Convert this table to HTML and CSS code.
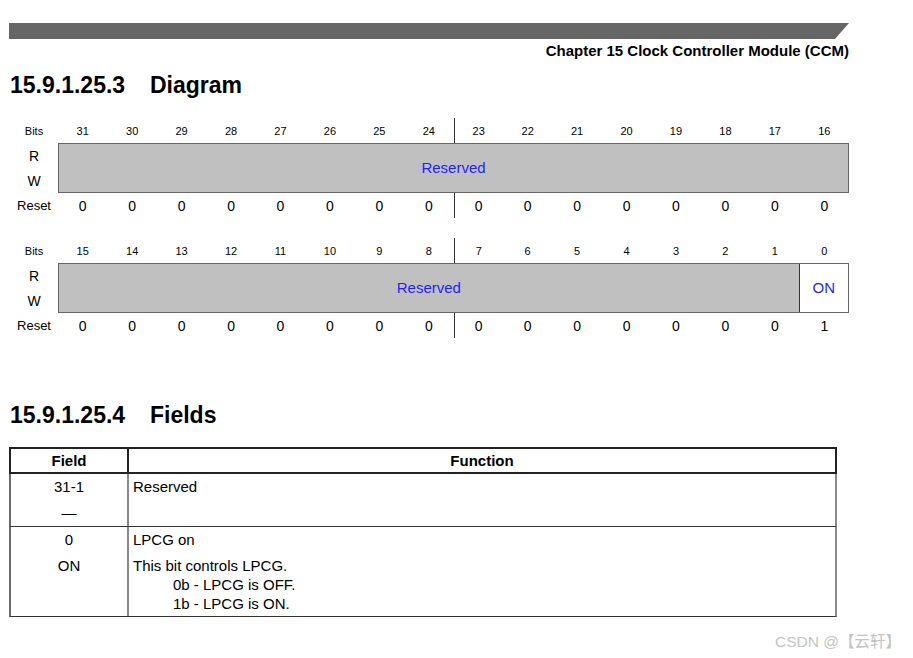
FILE: index.html
```html
<!DOCTYPE html>
<html lang="en">
<head>
<meta charset="utf-8">
<title>CCM LPCG Register</title>
<link rel="stylesheet" href="styles.css">
</head>
<body>
<div class="page">
  <div class="topbar"></div>
  <div class="chapter">Chapter 15 Clock Controller Module (CCM)</div>

  <h2 class="heading"><span class="num">15.9.1.25.3</span>Diagram</h2>

  <div class="reg">
    <div class="lbl small">Bits</div>
    <div class="bit">31</div><div class="bit">30</div><div class="bit">29</div><div class="bit">28</div>
    <div class="bit">27</div><div class="bit">26</div><div class="bit">25</div><div class="bit">24</div>
    <div class="bit div">23</div><div class="bit">22</div><div class="bit">21</div><div class="bit">20</div>
    <div class="bit">19</div><div class="bit">18</div><div class="bit">17</div><div class="bit">16</div>
    <div class="lbl rw r">R</div>
    <div class="lbl rw w">W</div>
    <div class="box">
      <div class="res full">Reserved</div>
    </div>
    <div class="lbl reset">Reset</div>
    <div class="val">0</div><div class="val">0</div><div class="val">0</div><div class="val">0</div>
    <div class="val">0</div><div class="val">0</div><div class="val">0</div><div class="val">0</div>
    <div class="val div">0</div><div class="val">0</div><div class="val">0</div><div class="val">0</div>
    <div class="val">0</div><div class="val">0</div><div class="val">0</div><div class="val">0</div>
  </div>

  <div class="reg second">
    <div class="lbl small">Bits</div>
    <div class="bit">15</div><div class="bit">14</div><div class="bit">13</div><div class="bit">12</div>
    <div class="bit">11</div><div class="bit">10</div><div class="bit">9</div><div class="bit">8</div>
    <div class="bit div">7</div><div class="bit">6</div><div class="bit">5</div><div class="bit">4</div>
    <div class="bit">3</div><div class="bit">2</div><div class="bit">1</div><div class="bit">0</div>
    <div class="lbl rw r">R</div>
    <div class="lbl rw w">W</div>
    <div class="box">
      <div class="res part">Reserved</div>
      <div class="on">ON</div>
    </div>
    <div class="lbl reset">Reset</div>
    <div class="val">0</div><div class="val">0</div><div class="val">0</div><div class="val">0</div>
    <div class="val">0</div><div class="val">0</div><div class="val">0</div><div class="val">0</div>
    <div class="val div">0</div><div class="val">0</div><div class="val">0</div><div class="val">0</div>
    <div class="val">0</div><div class="val">0</div><div class="val">0</div><div class="val">1</div>
  </div>

  <h2 class="heading fields-heading"><span class="num">15.9.1.25.4</span>Fields</h2>

  <div class="fields">
    <div class="fhead">
      <div class="fh-field">Field</div>
      <div class="fh-func">Function</div>
    </div>
    <div class="frow">
      <div class="fcell field">
        <p>31-1</p>
        <p class="gap">—</p>
      </div>
      <div class="fcell func">
        <p>Reserved</p>
      </div>
    </div>
    <div class="frow last">
      <div class="fcell field">
        <p>0</p>
        <p class="gap">ON</p>
      </div>
      <div class="fcell func">
        <p>LPCG on</p>
        <p class="gap">This bit controls LPCG.</p>
        <p class="indent">0b - LPCG is OFF.</p>
        <p class="indent">1b - LPCG is ON.</p>
      </div>
    </div>
  </div>

  <div class="watermark">CSDN @【云轩】</div>
</div>
</body>
</html>
```

FILE: styles.css
```css
* { box-sizing: border-box; }

body {
  margin: 0;
  background: #ffffff;
  color: #000000;
  font-family: "Liberation Sans", Arial, "Noto Sans CJK SC", sans-serif;
}

.page {
  position: relative;
  width: 913px;
  height: 658px;
  padding-top: 23px;
}

.topbar {
  margin-left: 9px;
  width: 840px;
  height: 16px;
  background: #666666;
  clip-path: polygon(0 0, 100% 0, calc(100% - 14px) 100%, 0 100%);
}

.chapter {
  width: 849px;
  margin-top: 3px;
  text-align: right;
  font-weight: bold;
  font-size: 15px;
  line-height: 18px;
}

.heading {
  margin: 12px 0 0 10px;
  font-size: 23px;
  line-height: 26px;
  font-weight: bold;
}

.heading .num {
  display: inline-block;
  width: 140px;
}

.fields-heading {
  margin-top: 64px;
}

/* register diagram */
.reg {
  margin-top: 20px;
  width: 849px;
  display: grid;
  grid-template-columns: 58px repeat(16, 1fr);
  grid-template-rows: 25px 25px 25px 25px;
}

.reg.second {
  margin-top: 20px;
}

.lbl {
  grid-column: 1;
  padding-left: 10px;
  display: flex;
  align-items: center;
  justify-content: center;
}

.lbl.small { font-size: 11px; }
.lbl.rw { font-size: 14px; }
.lbl.r { grid-row: 2; }
.lbl.w { grid-row: 3; }
.lbl.reset { grid-row: 4; font-size: 13px; }

.bit {
  font-size: 11px;
  display: flex;
  align-items: center;
  justify-content: center;
}

.val {
  grid-row: 4;
  font-size: 14px;
  display: flex;
  align-items: center;
  justify-content: center;
}

.div {
  border-left: 1px solid #333333;
}

.box {
  grid-column: 2 / 18;
  grid-row: 2 / 4;
  border: 1px solid #666666;
  display: grid;
  grid-template-columns: repeat(16, 1fr);
}

.res {
  background: #c0c0c0;
  color: #1f1fff;
  font-size: 15px;
  padding-bottom: 2px;
  display: flex;
  align-items: center;
  justify-content: center;
}

.res.full { grid-column: 1 / 17; }
.res.part { grid-column: 1 / 16; }

.on {
  grid-column: 16 / 17;
  border-left: 1px solid #333333;
  background: #ffffff;
  color: #1f1fff;
  font-size: 15px;
  padding-bottom: 2px;
  display: flex;
  align-items: center;
  justify-content: center;
}

/* fields table */
.fields {
  margin: 19px 0 0 9px;
  width: 828px;
  font-size: 15px;
}

.fhead {
  display: grid;
  grid-template-columns: 118px 1fr;
  height: 27px;
  border: 2px solid #222222;
  font-weight: bold;
}

.fh-field,
.fh-func {
  display: flex;
  align-items: center;
  justify-content: center;
}

.fh-field {
  border-right: 2px solid #222222;
}

.frow {
  display: grid;
  grid-template-columns: 118px 1fr;
  border-left: 2px solid #6a6a6a;
  border-right: 2px solid #8a8a8a;
  border-bottom: 1px solid #333333;
  height: 53px;
}

.frow.last {
  height: 90px;
}

.fcell {
  padding-top: 3px;
}

.fcell p {
  margin: 0;
  line-height: 19px;
}

.fcell p.gap {
  margin-top: 7px;
}

.field {
  text-align: center;
  border-right: 2px solid #8a8a8a;
}

.func {
  padding-left: 4px;
}

.func p.indent {
  padding-left: 40px;
}

.watermark {
  position: absolute;
  right: 12px;
  top: 632px;
  font-size: 15.5px;
  line-height: 20px;
  color: #c4c4c4;
}
```
